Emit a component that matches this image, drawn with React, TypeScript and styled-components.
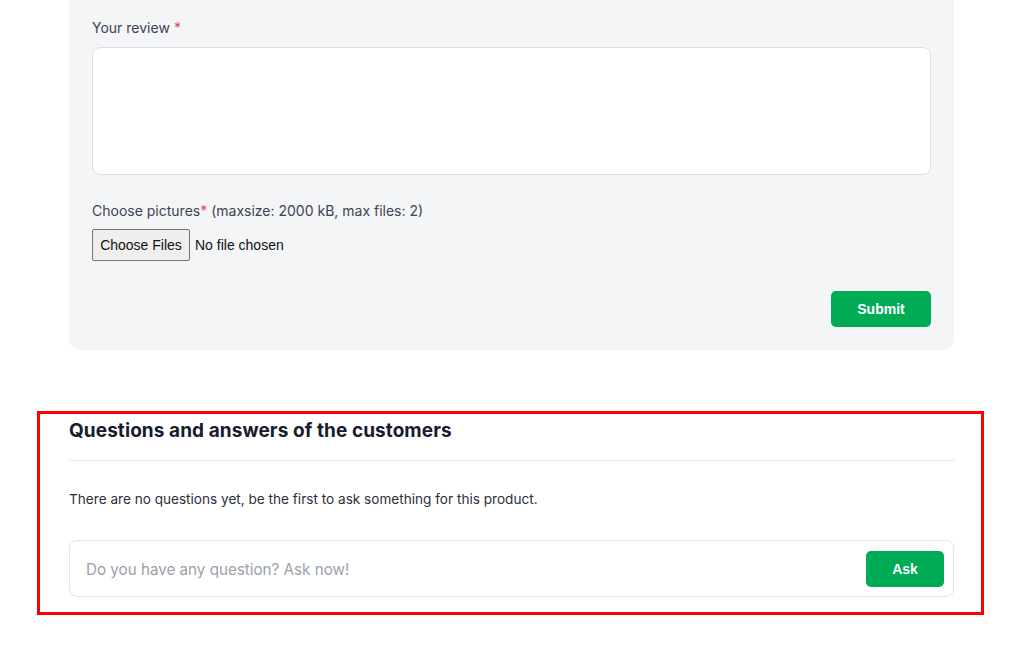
import React from "react";
import styled, { createGlobalStyle } from "styled-components";

const Global = createGlobalStyle`
  html, body { margin: 0; padding: 0; background: #ffffff; }
  body { font-family: Inter, "Noto Sans", "Liberation Sans", sans-serif; color: #212b36; }
  * { box-sizing: border-box; }
`;

const Page = styled.div`
  display: flex;
  flex-direction: column;
  padding-bottom: 44px;
`;

const Card = styled.form`
  margin-left: 69px;
  width: 885px;
  background: #f4f5f7;
  border-radius: 0 0 12px 12px;
  padding: 18px 23px 23px;
  display: flex;
  flex-direction: column;
`;

const Label = styled.label`
  font-size: 14px;
  line-height: 20px;
  color: #3d4451;
`;

const Req = styled.span<{ $gap?: boolean }>`
  color: #e5484d;
  margin-left: ${(p) => (p.$gap ? "4px" : "0")};
`;

const TextArea = styled.textarea`
  margin-top: 9px;
  height: 128px;
  width: 100%;
  resize: none;
  background: #ffffff;
  border: 1px solid #dcdfe4;
  border-radius: 8px;
  font: inherit;
`;

const FileLabel = styled(Label)`
  margin-top: 26px;
`;

const FileRow = styled.div`
  margin-top: 8px;
  display: flex;
  align-items: center;
  gap: 5px;
  font-family: "Liberation Sans", Arial, sans-serif;
  font-size: 14px;
  color: #111111;
`;

const FileButton = styled.span`
  display: inline-flex;
  align-items: center;
  justify-content: center;
  height: 32px;
  width: 98px;
  background: #efefef;
  border: 1px solid #767676;
  border-radius: 2px;
  font-size: 14px;
`;

const Actions = styled.div`
  margin-top: 30px;
  display: flex;
  justify-content: flex-end;
`;

const GreenButton = styled.button<{ $w: number }>`
  width: ${(p) => p.$w}px;
  height: 36px;
  border: none;
  border-radius: 5px;
  background: #00ab55;
  color: #ffffff;
  font-family: "Liberation Sans", Arial, sans-serif;
  font-weight: 700;
  font-size: 14px;
  padding-top: 1px;
  cursor: pointer;
`;

const QASection = styled.section`
  margin-top: 61px;
  margin-left: 37px;
  width: 947px;
  border: 3px solid #ff0000;
  padding: 4px 27px 15px 29px;
  display: flex;
  flex-direction: column;
`;

const Heading = styled.h2`
  margin: 0;
  font-size: 19px;
  line-height: 26px;
  font-weight: 700;
  letter-spacing: 0.08px;
  color: #161c2d;
  padding-bottom: 16px;
  border-bottom: 1px solid #e3e5e8;
`;

const Empty = styled.p`
  margin: 28px 0 0;
  font-size: 13.6px;
  line-height: 20px;
  color: #2a303b;
`;

const AskBox = styled.div`
  margin-top: 31px;
  height: 57px;
  border: 1px solid #e3e5e8;
  border-radius: 8px;
  display: flex;
  align-items: center;
  padding: 0 9px 0 14px;
  gap: 12px;
`;

const AskInput = styled.input`
  flex: 1;
  border: none;
  outline: none;
  background: transparent;
  font-family: inherit;
  font-size: 15.2px;
  color: #212b36;
  padding: 1px 2px 0;
  &::placeholder { color: #9aa1ab; }
`;

export default function App() {
  return (
    <>
      <Global />
      <Page>
        <Card onSubmit={(e) => e.preventDefault()}>
          <Label>
            Your review<Req $gap>*</Req>
          </Label>
          <TextArea />
          <FileLabel>
            Choose pictures<Req>*</Req> (maxsize: 2000 kB, max files: 2)
          </FileLabel>
          <FileRow>
            <FileButton>Choose Files</FileButton>
            <span>No file chosen</span>
          </FileRow>
          <Actions>
            <GreenButton $w={100} type="submit">Submit</GreenButton>
          </Actions>
        </Card>
        <QASection>
          <Heading>Questions and answers of the customers</Heading>
          <Empty>There are no questions yet, be the first to ask something for this product.</Empty>
          <AskBox>
            <AskInput placeholder="Do you have any question? Ask now!" />
            <GreenButton $w={78} type="button">Ask</GreenButton>
          </AskBox>
        </QASection>
      </Page>
    </>
  );
}
